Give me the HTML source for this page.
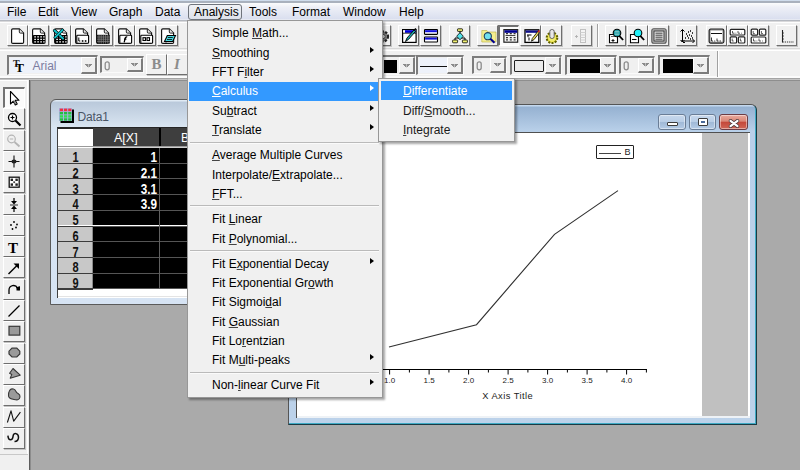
<!DOCTYPE html><html><head><meta charset="utf-8"><style>
*{margin:0;padding:0;box-sizing:border-box}
html,body{width:800px;height:470px;overflow:hidden}
body{position:relative;background:#aaaaaa;font-family:"Liberation Sans",sans-serif;font-size:12px;color:#000}
.a{position:absolute}
svg{position:absolute;overflow:visible}
#menubar{left:0;top:0;width:800px;height:22px;background:linear-gradient(#cfdcec 0,#cfdcec 1px,#a9b1bd 1px,#a9b1bd 3px,#fbfcfd 3px,#eef0f7 7px,#dadfef 19px,#e6e9f2 19px,#e6e9f2 20px,#b4b8c0 20px,#b4b8c0 21px,#d8d8da 21px,#d8d8da 22px)}
#menubar span{position:absolute;top:5px;line-height:14px;color:#000}
.tbbg{background:#f0f0f0}
.btn{position:absolute;border-left:1px solid #fff;border-top:1px solid #fff;border-right:1px solid #6e6e6e;border-bottom:1px solid #6e6e6e;box-shadow:1px 1px 0 #c4c4c4}
.combo{position:absolute;border-top:2px solid #7c7c7c;border-left:2px solid #7c7c7c;border-right:1px solid #fafafa;border-bottom:1px solid #fafafa;background:#f0f0f0}
.dd{position:absolute;top:0;bottom:0;right:0;width:16px;background:#efefef;border-top:1px solid #fff;border-left:1px solid #fff;border-right:2px solid #7c7c7c;border-bottom:2px solid #7c7c7c}
.dd:after{content:"";position:absolute;left:50%;top:50%;margin-left:-3.5px;margin-top:-1.5px;width:7px;height:3.5px;background:linear-gradient(to bottom right,transparent 49%,#8a8a8a 50%) left/3.5px 3.5px no-repeat,linear-gradient(to bottom left,transparent 49%,#8a8a8a 50%) right/3.5px 3.5px no-repeat;transform:rotate(180deg)}
.mi{position:absolute;left:24px;height:19px;line-height:19px;color:#1a1a1a;white-space:nowrap}

.arr{position:absolute;left:183px;width:0;height:0;border-top:4px solid transparent;border-bottom:4px solid transparent;border-left:4px solid #000}
u{text-decoration:underline;text-decoration-thickness:1.2px;text-underline-offset:1.3px;text-decoration-color:#444}
.w u{text-decoration-color:#fff}
.sep{position:absolute;left:4px;right:4px;height:1px;background:#c8c8c8;border-bottom:1px solid #fff}
</style></head><body>
<div id="menubar" class="a">
<span style="left:7px">File</span>
<span style="left:38px">Edit</span>
<span style="left:71px">View</span>
<span style="left:109px">Graph</span>
<span style="left:155px">Data</span>
<div class="a" style="left:188px;top:4px;width:54px;height:16px;border:1px solid #6f747c;border-radius:3px;background:linear-gradient(#f0f2f6,#dde1ea)"></div>
<span style="left:194px">Analysis</span>
<span style="left:249px">Tools</span>
<span style="left:292px">Format</span>
<span style="left:343px">Window</span>
<span style="left:399px">Help</span>
</div>
<div class="a tbbg" style="left:0;top:22px;width:800px;height:58px"></div>
<div class="a" style="left:0;top:22px;width:800px;height:1px;background:#fdfdfd"></div>
<div class="a" style="left:0;top:48px;width:800px;height:1px;background:#d8d8d8"></div>
<div class="a" style="left:0;top:50px;width:800px;height:1px;background:#fff"></div>
<div class="a" style="left:0;top:76px;width:800px;height:2px;background:#fbfbfb"></div>
<div class="a" style="left:0;top:78px;width:800px;height:2px;background:linear-gradient(#a4a4a4 50%,#c4c4c4 50%)"></div>
<div class="a" style="left:29px;top:80px;width:771px;height:1px;background:#8e8e8e"></div>
<div class="btn" style="left:7.0px;top:25px;width:21px;height:21px"></div>
<div class="a" style="left:10.0px;top:28px;width:16px;height:16px"><svg style="left:0px;top:0px" width="16" height="16" viewBox="0 0 16 16"><path d="M1.6 14.2V2Q1.6 0.8 2.8 0.8H9.3L13.6 5.1V14.2Q13.6 15.3 12.5 15.3H2.8Q1.6 15.3 1.6 14.2Z" fill="#fff" stroke="#111" stroke-width="1.15"/><path d="M9.3 1V4Q9.3 5.1 10.4 5.1H13.4" fill="#e4e4e4" stroke="#111" stroke-width="0.9"/></svg></div>
<div class="btn" style="left:28.4px;top:25px;width:21px;height:21px"></div>
<div class="a" style="left:31.4px;top:28px;width:16px;height:16px"><svg style="left:0px;top:0px" width="16" height="16" viewBox="0 0 16 16"><path d="M1.6 14.2V2Q1.6 0.8 2.8 0.8H9.3L13.6 5.1V14.2Q13.6 15.3 12.5 15.3H2.8Q1.6 15.3 1.6 14.2Z" fill="#fff" stroke="#111" stroke-width="1.15"/><path d="M9.3 1V4Q9.3 5.1 10.4 5.1H13.4" fill="#e4e4e4" stroke="#111" stroke-width="0.9"/><rect x="2" y="7" width="12.5" height="8.6" rx="0.6" fill="#000"/><path d="M3.3 8.8h1.6M6.3 8.8h1.6M9.3 8.8h1.6M12.2 8.8h1.4M3.3 11.3h1.6M6.3 11.3h1.6M9.3 11.3h1.6M12.2 11.3h1.4M3.3 13.8h1.6M6.3 13.8h1.6M9.3 13.8h1.6M12.2 13.8h1.4" stroke="#fff" stroke-width="1.3"/></svg></div>
<div class="btn" style="left:49.7px;top:25px;width:21px;height:21px"></div>
<div class="a" style="left:52.7px;top:28px;width:16px;height:16px"><svg style="left:0px;top:0px" width="16" height="16" viewBox="0 0 16 16"><path d="M1.6 14.2V2Q1.6 0.8 2.8 0.8H9.3L13.6 5.1V14.2Q13.6 15.3 12.5 15.3H2.8Q1.6 15.3 1.6 14.2Z" fill="#fff" stroke="#111" stroke-width="1.15"/><path d="M9.3 1V4Q9.3 5.1 10.4 5.1H13.4" fill="#e4e4e4" stroke="#111" stroke-width="0.9"/><rect x="2" y="7" width="12.5" height="8.6" rx="0.6" fill="#000"/><path d="M3.3 8.8h1.6M6.3 8.8h1.6M9.3 8.8h1.6M12.2 8.8h1.4M3.3 11.3h1.6M6.3 11.3h1.6M9.3 11.3h1.6M12.2 11.3h1.4M3.3 13.8h1.6M6.3 13.8h1.6M9.3 13.8h1.6M12.2 13.8h1.4" stroke="#fff" stroke-width="1.3"/><path d="M1.5 2.5L10 10.5" stroke="#000" stroke-width="3.2" stroke-linecap="round"/><path d="M1.5 2.5L10 10.5" stroke="#10c0c8" stroke-width="2" stroke-linecap="round"/><path d="M9.5 2L2 9.5" stroke="#000" stroke-width="3" stroke-linecap="round"/><path d="M9.5 2L2 9.5" stroke="#10c0c8" stroke-width="1.8" stroke-linecap="round"/></svg></div>
<div class="btn" style="left:71.1px;top:25px;width:21px;height:21px"></div>
<div class="a" style="left:74.1px;top:28px;width:16px;height:16px"><svg style="left:0px;top:0px" width="16" height="16" viewBox="0 0 16 16"><path d="M1.6 14.2V2Q1.6 0.8 2.8 0.8H9.3L13.6 5.1V14.2Q13.6 15.3 12.5 15.3H2.8Q1.6 15.3 1.6 14.2Z" fill="#fff" stroke="#111" stroke-width="1.15"/><path d="M9.3 1V4Q9.3 5.1 10.4 5.1H13.4" fill="#e4e4e4" stroke="#111" stroke-width="0.9"/><rect x="2.8" y="7.2" width="11.8" height="8" rx="0.8" fill="#fff" stroke="#000" stroke-width="1.1"/><path d="M4.8 9.5v3.5h1.5" stroke="#000" fill="none" stroke-width="1"/><rect x="7.8" y="12.2" width="1.6" height="1.6"/><rect x="10.8" y="12.2" width="1.6" height="1.6"/></svg></div>
<div class="btn" style="left:92.4px;top:25px;width:21px;height:21px"></div>
<div class="a" style="left:95.4px;top:28px;width:16px;height:16px"><svg style="left:0px;top:0px" width="16" height="16" viewBox="0 0 16 16"><path d="M1.6 14.2V2Q1.6 0.8 2.8 0.8H9.3L13.6 5.1V14.2Q13.6 15.3 12.5 15.3H2.8Q1.6 15.3 1.6 14.2Z" fill="#fff" stroke="#111" stroke-width="1.15"/><path d="M9.3 1V4Q9.3 5.1 10.4 5.1H13.4" fill="#e4e4e4" stroke="#111" stroke-width="0.9"/><rect x="2" y="6.8" width="12.8" height="8.8" fill="#1a1a1a"/><path d="M4 6.8v8.8M6.2 6.8v8.8M8.4 6.8v8.8M10.6 6.8v8.8M12.8 6.8v8.8M2 9h12.8M2 11.2h12.8M2 13.4h12.8" stroke="#8a8a8a" stroke-width="0.7"/></svg></div>
<div class="btn" style="left:113.8px;top:25px;width:21px;height:21px"></div>
<div class="a" style="left:116.8px;top:28px;width:16px;height:16px"><svg style="left:0px;top:0px" width="16" height="16" viewBox="0 0 16 16"><path d="M1.6 14.2V2Q1.6 0.8 2.8 0.8H9.3L13.6 5.1V14.2Q13.6 15.3 12.5 15.3H2.8Q1.6 15.3 1.6 14.2Z" fill="#fff" stroke="#111" stroke-width="1.15"/><path d="M9.3 1V4Q9.3 5.1 10.4 5.1H13.4" fill="#e4e4e4" stroke="#111" stroke-width="0.9"/><rect x="2.8" y="7.2" width="11.8" height="8" rx="0.8" fill="#fff" stroke="#000" stroke-width="1.1"/><path d="M10.2 9.2c-1.2-0.6-1.9 0-2.2 1.6l-0.8 3.6M7 11.2h2.4" stroke="#000" fill="none" stroke-width="1.3"/></svg></div>
<div class="btn" style="left:135.2px;top:25px;width:21px;height:21px"></div>
<div class="a" style="left:138.2px;top:28px;width:16px;height:16px"><svg style="left:0px;top:0px" width="16" height="16" viewBox="0 0 16 16"><path d="M1.6 14.2V2Q1.6 0.8 2.8 0.8H9.3L13.6 5.1V14.2Q13.6 15.3 12.5 15.3H2.8Q1.6 15.3 1.6 14.2Z" fill="#fff" stroke="#111" stroke-width="1.15"/><path d="M9.3 1V4Q9.3 5.1 10.4 5.1H13.4" fill="#e4e4e4" stroke="#111" stroke-width="0.9"/><rect x="2.8" y="7.2" width="11.8" height="8" rx="0.8" fill="#fff" stroke="#000" stroke-width="1.1"/><rect x="5" y="9.7" width="2.5" height="2.8" fill="none" stroke="#000" stroke-width="1.1"/><rect x="9" y="9.7" width="2.5" height="2.8" fill="none" stroke="#000" stroke-width="1.1"/></svg></div>
<div class="btn" style="left:156.5px;top:25px;width:21px;height:21px"></div>
<div class="a" style="left:159.5px;top:28px;width:16px;height:16px"><svg style="left:0px;top:0px" width="16" height="16" viewBox="0 0 16 16"><path d="M1.6 14.2V2Q1.6 0.8 2.8 0.8H9.3L13.6 5.1V14.2Q13.6 15.3 12.5 15.3H2.8Q1.6 15.3 1.6 14.2Z" fill="#fff" stroke="#111" stroke-width="1.15"/><path d="M9.3 1V4Q9.3 5.1 10.4 5.1H13.4" fill="#e4e4e4" stroke="#111" stroke-width="0.9"/><path d="M4.5 13.5L7.3 7.5H15.5L12.7 13.5Z" fill="#48d8e0" stroke="#000" stroke-width="1.1"/><path d="M7.8 9.5h5M7 11.5h5" stroke="#000" stroke-width="0.8"/><path d="M6 14.5v1.3" stroke="#000"/></svg></div>
<div class="btn" style="left:370px;top:25px;width:21px;height:21px"></div>
<svg style="left:375px;top:28px" width="16" height="16" viewBox="0 0 16 16"><circle cx="8" cy="8.5" r="5" fill="#888" stroke="#222" stroke-width="2.2" stroke-dasharray="2.2 1.4"/><circle cx="8" cy="8.5" r="2.2" fill="#eee" stroke="#333" stroke-width="0.8"/></svg>
<div class="btn" style="left:398px;top:25px;width:21px;height:21px"></div>
<svg style="left:401px;top:28px" width="16" height="16" viewBox="0 0 16 16"><rect x="1.6" y="1.6" width="13.5" height="12.8" fill="#fff" stroke="#000" stroke-width="1.2"/><rect x="4" y="2.2" width="10.5" height="2.6" fill="#0000e0"/><rect x="2.2" y="2.2" width="1.5" height="2.6" fill="#fff"/><path d="M1.6 5.2h13.5" stroke="#000" stroke-width="0.8"/><path d="M4.5 13.5l1.5-3.5 7-8 1.6 1.3-7 8z" fill="#20b0b0" stroke="#000" stroke-width="0.9"/><path d="M13 2l2-1.5" stroke="#000" stroke-width="1.2"/></svg>
<div class="btn" style="left:420px;top:25px;width:21px;height:21px"></div>
<svg style="left:422.5px;top:28px" width="16" height="16" viewBox="0 0 16 16"><rect x="1.5" y="1.6" width="13" height="4.8" rx="0.6" fill="#fff" stroke="#000" stroke-width="1.1"/><rect x="2.1" y="2.2" width="11.8" height="2" fill="#1010e0"/><rect x="1.5" y="9" width="13" height="5" rx="0.6" fill="#fff" stroke="#000" stroke-width="1.1"/><rect x="2.1" y="9.6" width="11.8" height="2" fill="#1010e0"/></svg>
<div class="btn" style="left:449px;top:25px;width:21px;height:21px"></div>
<svg style="left:451.5px;top:28px" width="16" height="16" viewBox="0 0 16 16"><path d="M8 2.5v4M3 12.5V10h10v2.5M8 9v1" stroke="#000" fill="none" stroke-width="1"/><rect x="5.5" y="0.8" width="5" height="2.6" rx="0.6" fill="#f0f070" stroke="#000" stroke-width="0.8"/><path d="M8 4.6l3.3 3.6L8 11.8 4.7 8.2z" fill="#50e0e8" stroke="#000" stroke-width="0.8"/><rect x="0.6" y="12" width="5" height="2.8" rx="0.6" fill="#f0f070" stroke="#000" stroke-width="0.8"/><rect x="10.4" y="12" width="5" height="2.8" rx="0.6" fill="#f0f070" stroke="#000" stroke-width="0.8"/></svg>
<div class="btn" style="left:477px;top:25px;width:21px;height:21px"></div>
<svg style="left:480.5px;top:28px" width="16" height="16" viewBox="0 0 16 16"><path d="M0.8 2.5h5l1.2 1.5h8v10H0.8z" fill="#f4ee90" stroke="#b8b040" stroke-width="0.6"/><circle cx="6.8" cy="8.2" r="3.6" fill="#70e0f0" stroke="#204060" stroke-width="1.1"/><path d="M9.3 10.8l4.2 4" stroke="#000090" stroke-width="2.1"/></svg>
<div class="a" style="left:498px;top:25px;width:21px;height:21px;border-left:2px solid #727272;border-top:2px solid #727272;border-right:1px solid #fff;border-bottom:1px solid #fff;background:#fbfbfb"></div>
<svg style="left:503px;top:28px" width="16" height="16" viewBox="0 0 16 16"><rect x="0.9" y="1.6" width="13.8" height="12.6" fill="#f4f4f4" stroke="#222" stroke-width="1.2"/><rect x="1.5" y="2.2" width="12.6" height="2.6" fill="#000090"/><path d="M2.5 7.5h9.8" stroke="#333" stroke-width="0.9"/><path d="M3 5.6h2M6.8 5.6h2M10.6 5.6h2M3 9.6h2M6.8 9.6h2M10.6 9.6h2M3 11.8h2M6.8 11.8h2M10.6 11.8h2" stroke="#333" stroke-width="1.2"/></svg>
<div class="btn" style="left:519.5px;top:25px;width:21px;height:21px"></div>
<svg style="left:523.5px;top:28px" width="16" height="16" viewBox="0 0 16 16"><rect x="1" y="1.8" width="13.8" height="12.6" fill="#fff" stroke="#000" stroke-width="1.3"/><rect x="1.6" y="2.4" width="12.6" height="2.4" fill="#10108a"/><path d="M3 7h4.5M4 7v2.2M5 9.5v3" stroke="#000" stroke-width="1"/><path d="M7.5 13.2l0.8-2.8 5.5-7 1.6 1.3-5.5 7z" fill="#f0e060" stroke="#000" stroke-width="0.8"/><path d="M13.6 3.5l1.2-1.6 1.2 1-1.2 1.6z" fill="#e02020"/></svg>
<div class="btn" style="left:541px;top:25px;width:21px;height:21px"></div>
<svg style="left:544px;top:28px" width="16" height="16" viewBox="0 0 16 16"><circle cx="8" cy="9.8" r="5.3" fill="#e8e040" stroke="#606000" stroke-width="2" stroke-dasharray="2 1.3"/><circle cx="8" cy="9.8" r="3.6" fill="#f0ec70"/><rect x="5.8" y="1.5" width="4.4" height="9" rx="2" fill="#e8e8e8" stroke="#555" stroke-width="0.9"/></svg>
<div class="btn" style="left:570.5px;top:25px;width:21px;height:21px"></div>
<svg style="left:573px;top:28px" width="16" height="16" viewBox="0 0 16 16"><path d="M2 8.5h3M3.5 7v3" stroke="#b0b0b0" stroke-width="0.9"/><rect x="7.5" y="1.5" width="5" height="13" fill="#f4f4f4" stroke="#c0c0c0"/><path d="M7.5 4.5h5M7.5 7h5M7.5 9.5h5M7.5 12h5" stroke="#d0d0d0"/></svg>
<div class="a" style="left:597px;top:24px;width:1px;height:23px;background:#a0a0a0"></div><div class="a" style="left:598px;top:24px;width:1px;height:23px;background:#fff"></div>
<div class="btn" style="left:605px;top:25px;width:21px;height:21px"></div>
<svg style="left:607.5px;top:28px" width="16" height="16" viewBox="0 0 16 16"><path d="M1.5 6.5h7l1 1v7.3h-8z" fill="#fff" stroke="#000" stroke-width="1.1"/><path d="M3.5 12.5h3M5 11v3" stroke="#000" stroke-width="0.9"/><path d="M3 8.5h4" stroke="#000" stroke-width="0.6"/><circle cx="9" cy="5" r="3.8" fill="#20a0a8" stroke="#000" stroke-width="1.1"/><path d="M7 3.5h4M7 5h4M7 6.5h4" stroke="#c0e0e0" stroke-width="0.5"/><path d="M11.3 7.8l3.8 4.2" stroke="#000" stroke-width="1.8"/></svg>
<div class="btn" style="left:626.5px;top:25px;width:21px;height:21px"></div>
<svg style="left:629px;top:28px" width="16" height="16" viewBox="0 0 16 16"><path d="M1.5 6.5h7l1 1v7.3h-8z" fill="#fff" stroke="#000" stroke-width="1.1"/><path d="M3 11.5h4.5" stroke="#000" stroke-width="1.1"/><circle cx="9" cy="5" r="3.8" fill="#20f0f8" stroke="#000" stroke-width="1.1"/><path d="M11.3 7.8l3.8 4.2" stroke="#000" stroke-width="1.8"/></svg>
<div class="btn" style="left:648px;top:25px;width:21px;height:21px"></div>
<svg style="left:650.5px;top:28px" width="16" height="16" viewBox="0 0 16 16"><rect x="0.8" y="0.8" width="14.4" height="14.4" rx="2" fill="#b4b4b4" stroke="#555" stroke-width="1.1"/><rect x="3" y="3" width="10" height="10" fill="#e4e4e4" stroke="#303030" stroke-width="0.9"/><path d="M4.5 5.2h7M4.5 7.2h7M4.5 9.2h7M4.5 11.2h7" stroke="#333" stroke-width="0.9"/></svg>
<div class="btn" style="left:676px;top:25px;width:21px;height:21px"></div>
<svg style="left:679px;top:28px" width="16" height="16" viewBox="0 0 16 16"><path d="M3.5 1.5v12.5M1.5 3.5l2-2 2 2M1.5 12l2 2 2-2M2 13h13.5M13.5 11l2 2-2 2M4 14.5h2" stroke="#000" fill="none" stroke-width="1"/><path d="M7 6h1M9 4h1M11 3h1M13 5h1M8 8h1M10 7h1M12 8h1M9 10h1M13 10h1M11 11h1M6 10h1" stroke="#000" stroke-width="1.3"/></svg>
<div class="btn" style="left:705.5px;top:25px;width:21px;height:21px"></div>
<svg style="left:708px;top:28px" width="16" height="16" viewBox="0 0 16 16"><rect x="1.2" y="1.2" width="14.6" height="13.8" rx="1.5" fill="#fff" stroke="#222" stroke-width="1.3"/><rect x="2.2" y="2.2" width="12.6" height="11.8" fill="none" stroke="#888" stroke-width="0.6"/><path d="M3 5.5h11" stroke="#111" stroke-width="1"/><path d="M3.5 9.5v3.5h1.5M9 10.5v2.5h1.5" stroke="#222" fill="none" stroke-width="0.9"/><path d="M6.2 13h1M11.5 13h1.5" stroke="#222" stroke-width="0.9"/></svg>
<div class="btn" style="left:727px;top:25px;width:21px;height:21px"></div>
<svg style="left:728.5px;top:28px" width="16" height="16" viewBox="0 0 16 16"><rect x="1.2" y="1.4" width="14.6" height="5.6" rx="1" fill="#fff" stroke="#222" stroke-width="1.2"/><path d="M3.5 3v2.2h2M9 3v2.2h2M6.5 5.2h0.8M12 5.2h0.8" stroke="#333" fill="none" stroke-width="0.8"/><rect x="1.2" y="8.8" width="6.4" height="6.2" rx="1" fill="#fff" stroke="#222" stroke-width="1.2"/><rect x="9.4" y="8.8" width="6.4" height="6.2" rx="1" fill="#fff" stroke="#222" stroke-width="1.2"/><path d="M3.2 10.5v2.5h1.5M11.4 10.5v2.5h1.5" stroke="#333" fill="none" stroke-width="0.8"/></svg>
<div class="btn" style="left:748px;top:25px;width:21px;height:21px"></div>
<svg style="left:749.5px;top:28px" width="16" height="16" viewBox="0 0 16 16"><rect x="1.2" y="1.2" width="6.4" height="6" rx="1" fill="#fff" stroke="#222" stroke-width="1.2"/><rect x="9.4" y="1.2" width="6.4" height="6" rx="1" fill="#fff" stroke="#222" stroke-width="1.2"/><path d="M3.2 3v2.5h1.5M11.4 3v2.5h1.5" stroke="#333" fill="none" stroke-width="0.8"/><rect x="1.2" y="9" width="14.6" height="6" rx="1" fill="#fff" stroke="#222" stroke-width="1.2"/><path d="M3.5 10.5v2.5h2M9 10.5v2.5h2M6.5 13h0.8M12 13h0.8" stroke="#333" fill="none" stroke-width="0.8"/></svg>
<div class="btn" style="left:776px;top:25px;width:21px;height:21px"></div>
<svg style="left:779px;top:28px" width="16" height="16" viewBox="0 0 16 16"><path d="M3.5 2v12.5" stroke="#222" stroke-width="1.1"/><path d="M3.5 14h11.5" stroke="#333" stroke-width="1.1" stroke-dasharray="1.3 0.9"/><path d="M4 5h1M4 8h1M4 11h1" stroke="#444" stroke-width="0.9"/></svg>
<div class="combo" style="left:7px;top:55px;width:91px;height:20px"><div class="a" style="left:1px;top:1px;right:1px;bottom:1px;background:#eef2fa"></div><svg style="left:2px;top:1px" width="18" height="16" viewBox="0 0 18 16"><text x="2" y="9" font-family="Liberation Serif" font-weight="bold" font-size="10" fill="#222">T</text><text x="4.2" y="13.6" font-family="Liberation Serif" font-weight="bold" font-size="13" fill="#000">T</text></svg><span class="a" style="left:23.5px;top:1.5px;line-height:14px;color:#7c7ca0">Arial</span><div class="dd"></div></div>
<div class="combo" style="left:100px;top:56px;width:44px;height:17px"><svg style="left:1.5px;top:3px" width="7" height="10" viewBox="0 0 7 10"><rect x="1.2" y="0.8" width="4" height="8" rx="2" fill="none" stroke="#8c8c8c" stroke-width="1.3"/></svg><div class="dd"></div></div>
<div class="btn" style="left:146px;top:54px;width:21px;height:21px"></div>
<span class="a" style="left:151.5px;top:57px;font:bold 15px/14px 'Liberation Serif';color:#8c8c8c">B</span>
<div class="btn" style="left:167px;top:54px;width:21px;height:21px"></div>
<span class="a" style="left:174px;top:57px;font:italic bold 15px/14px 'Liberation Serif';color:#8c8c8c">I</span>
<div class="combo" style="left:368px;top:55px;width:48px;height:20px"><div class="a" style="left:14px;top:3px;width:13px;height:13px;background:#000"></div><div class="dd"></div></div>
<div class="combo" style="left:416px;top:55px;width:48px;height:20px"><div class="a" style="left:1px;top:1px;right:1px;bottom:1px;background:#eef2fa"></div><div class="a" style="left:2px;top:9px;width:32px;height:1.2px;background:#111"></div><div class="dd"></div></div>
<div class="combo" style="left:472px;top:56px;width:34.5px;height:17.5px"><svg style="left:2px;top:3px" width="7" height="10" viewBox="0 0 7 10"><rect x="1.2" y="0.8" width="4" height="8" rx="2" fill="none" stroke="#8c8c8c" stroke-width="1.3"/></svg><div class="dd"></div></div>
<div class="combo" style="left:509.5px;top:55px;width:52.5px;height:20px"><div class="a" style="left:2.5px;top:2.5px;width:29.5px;height:12.5px;border:1.5px solid #202020;border-radius:1px;background:#ececec"></div><div class="dd"></div></div>
<div class="combo" style="left:564.5px;top:55px;width:52px;height:20px"><div class="a" style="left:3px;top:1.5px;width:30.5px;height:14.5px;background:#000"></div><div class="dd"></div></div>
<div class="combo" style="left:619px;top:56px;width:36px;height:17.5px"><svg style="left:2px;top:3px" width="7" height="10" viewBox="0 0 7 10"><rect x="1.2" y="0.8" width="4" height="8" rx="2" fill="none" stroke="#8c8c8c" stroke-width="1.3"/></svg><div class="dd"></div></div>
<div class="combo" style="left:657.5px;top:55px;width:52px;height:20px"><div class="a" style="left:3px;top:1.5px;width:30.5px;height:14.5px;background:#000"></div><div class="dd"></div></div>
<div class="a" style="left:717px;top:51px;width:1px;height:26px;background:#a0a0a0"></div><div class="a" style="left:718px;top:51px;width:1px;height:26px;background:#fff"></div>
<div class="a tbbg" style="left:0;top:80px;width:29px;height:375px"></div>
<div class="a" style="left:0;top:80px;width:28px;height:1px;background:#fff"></div>
<div class="a" style="left:27px;top:80px;width:1px;height:375px;background:#fff"></div>
<div class="a" style="left:29px;top:80px;width:2px;height:390px;background:linear-gradient(90deg,#5c5c5c 50%,#8c8c8c 50%)"></div>
<div class="a" style="left:0;top:455px;width:29px;height:15px;background:#f0f0f0"></div>
<div class="a" style="left:3px;top:87.0px;width:22px;height:21px;border-left:2px solid #727272;border-top:2px solid #727272;border-right:1px solid #fff;border-bottom:1px solid #fff;background:#fbfbfb"></div>
<svg style="left:5.5px;top:90.0px" width="16" height="16" viewBox="0 0 16 16"><path d="M4.5 1.5V14L7.3 11.2 9.3 15 11.2 14 9.2 10.3H13Z" fill="#fff" stroke="#000" stroke-width="1.1" stroke-linejoin="round"/><path d="M8 11l1.5 3" stroke="#777" stroke-width="1.5"/></svg>
<div class="btn" style="left:3px;top:108.3px;width:22px;height:21px"></div>
<svg style="left:5.5px;top:111.3px" width="16" height="16" viewBox="0 0 16 16"><circle cx="6.5" cy="6.5" r="4" fill="#fff" stroke="#000" stroke-width="1.3"/><path d="M4.5 6.5h4M6.5 4.5v4" stroke="#000" stroke-width="1.2"/><path d="M9.5 9.5l5 5" stroke="#000" stroke-width="2.2"/></svg>
<div class="btn" style="left:3px;top:129.6px;width:22px;height:21px"></div>
<svg style="left:5.5px;top:132.6px" width="16" height="16" viewBox="0 0 16 16"><circle cx="5.5" cy="6" r="3.8" fill="none" stroke="#b4b4b4" stroke-width="1.2"/><path d="M3.8 6h3.4" stroke="#b4b4b4" stroke-width="1"/><path d="M8.5 9l5 4.5" stroke="#b4b4b4" stroke-width="1.8"/></svg>
<div class="btn" style="left:3px;top:150.9px;width:22px;height:21px"></div>
<svg style="left:5.5px;top:153.9px" width="16" height="16" viewBox="0 0 16 16"><path d="M2.5 7.5h11M8 1.5v12" stroke="#111" stroke-width="1.1"/><ellipse cx="8" cy="7.5" rx="2.6" ry="2" fill="#222"/></svg>
<div class="btn" style="left:3px;top:172.2px;width:22px;height:21px"></div>
<svg style="left:5.5px;top:175.2px" width="16" height="16" viewBox="0 0 16 16"><rect x="3.2" y="2.2" width="10" height="10" fill="#fff" stroke="#111" stroke-width="1.3"/><rect x="4.6" y="3.6" width="2.4" height="2.4" fill="#222"/><rect x="9.4" y="3.6" width="2.4" height="2.4" fill="#222"/><rect x="4.6" y="8.4" width="2.4" height="2.4" fill="#222"/><rect x="9.4" y="8.4" width="2.4" height="2.4" fill="#222"/><rect x="7.3" y="6.3" width="1.8" height="1.8" fill="#444"/></svg>
<div class="btn" style="left:3px;top:193.5px;width:22px;height:21px"></div>
<svg style="left:5.5px;top:196.5px" width="16" height="16" viewBox="0 0 16 16"><path d="M8 1v5M8 10v5M2 8h0" stroke="#000" stroke-width="1.2"/><path d="M5 4l3 3.5 3-3.5z" fill="#000"/><path d="M5 12l3-3.5 3 3.5z" fill="#000"/><path d="M4 8h8" stroke="#000" stroke-width="0.8"/></svg>
<div class="btn" style="left:3px;top:214.8px;width:22px;height:21px"></div>
<svg style="left:5.5px;top:217.8px" width="16" height="16" viewBox="0 0 16 16"><circle cx="8" cy="4" r="0.9" fill="#000"/><circle cx="5" cy="7" r="0.9" fill="#000"/><circle cx="11" cy="6.5" r="0.9" fill="#000"/><circle cx="10" cy="9.5" r="0.9" fill="#000"/><circle cx="6.5" cy="11" r="0.9" fill="#000"/></svg>
<div class="btn" style="left:3px;top:236.1px;width:22px;height:21px"></div>
<svg style="left:5.5px;top:239.1px" width="16" height="16" viewBox="0 0 16 16"><text x="2" y="14" font-family="Liberation Serif" font-weight="bold" font-size="15">T</text></svg>
<div class="btn" style="left:3px;top:257.4px;width:22px;height:21px"></div>
<svg style="left:5.5px;top:260.4px" width="16" height="16" viewBox="0 0 16 16"><path d="M2.5 14L12 4.5" stroke="#000" stroke-width="1.5"/><path d="M7.5 3.5H13V9z" fill="#000"/></svg>
<div class="btn" style="left:3px;top:278.7px;width:22px;height:21px"></div>
<svg style="left:5.5px;top:281.7px" width="16" height="16" viewBox="0 0 16 16"><path d="M3 12V8a4.5 4.5 0 0 1 8.5-2" fill="none" stroke="#000" stroke-width="1.3"/><path d="M10 5.5l4-1.5-1 4.5z" fill="#000"/><rect x="10.5" y="5" width="3.5" height="3.5" fill="#000"/></svg>
<div class="btn" style="left:3px;top:300.0px;width:22px;height:21px"></div>
<svg style="left:5.5px;top:303.0px" width="16" height="16" viewBox="0 0 16 16"><path d="M2.5 13.5L13.5 2.5" stroke="#000" stroke-width="1.3"/></svg>
<div class="btn" style="left:3px;top:321.3px;width:22px;height:21px"></div>
<svg style="left:5.5px;top:324.3px" width="16" height="16" viewBox="0 0 16 16"><rect x="3" y="2.3" width="10.8" height="8.8" fill="#9a9a9a" stroke="#383838" stroke-width="1.2"/></svg>
<div class="btn" style="left:3px;top:342.6px;width:22px;height:21px"></div>
<svg style="left:5.5px;top:345.6px" width="16" height="16" viewBox="0 0 16 16"><path d="M6 2.2h4.8l3 3v2.8l-3 3H6l-3-3V5.2z" fill="#9a9a9a" stroke="#383838" stroke-width="1.2"/></svg>
<div class="btn" style="left:3px;top:363.9px;width:22px;height:21px"></div>
<svg style="left:5.5px;top:366.9px" width="16" height="16" viewBox="0 0 16 16"><path d="M7 1.5L14.2 8.2 4.2 11.2 5.8 7.4 3.6 6.2Z" fill="#9a9a9a" stroke="#383838" stroke-width="1.1" stroke-linejoin="round"/></svg>
<div class="btn" style="left:3px;top:385.2px;width:22px;height:21px"></div>
<svg style="left:5.5px;top:388.2px" width="16" height="16" viewBox="0 0 16 16"><path d="M4 2c2-2 5-1 6 1.5s4.5 2 4 5.5-3.5 3-6 2.5-5.5-0.5-5.5-4 0-3 1.5-5.5z" fill="#9a9a9a" stroke="#383838" stroke-width="1.1"/></svg>
<div class="btn" style="left:3px;top:406.5px;width:22px;height:21px"></div>
<svg style="left:5.5px;top:409.5px" width="16" height="16" viewBox="0 0 16 16"><path d="M1.4 12.5L5 0.9 7.7 11.1 14.4 2.2" fill="none" stroke="#111" stroke-width="1.1" stroke-linejoin="round"/></svg>
<div class="btn" style="left:3px;top:427.8px;width:22px;height:21px"></div>
<svg style="left:5.5px;top:430.8px" width="16" height="16" viewBox="0 0 16 16"><path d="M1.9 4.6C2.5 10.2 6.5 10.2 7.2 4.6 7.5 1.2 12.5 2.2 12.5 6.2 12.5 10.2 9.5 10.4 8.5 10.4" fill="none" stroke="#111" stroke-width="1.5"/></svg>
<div class="a" style="left:0;top:454px;width:28px;height:1px;background:#c8c8c8"></div>
<div class="a" style="left:50px;top:99px;width:160px;height:206px;border:1px solid #5a5a5a;border-radius:6px 6px 0 0;background:linear-gradient(#e0eaf4 0,#e0eaf4 1px,#bac9db 2px,#d9e5f1 27px,#d8e5f3 28px,#d6e3f3)"></div>
<svg style="left:59px;top:108px" width="15" height="15" viewBox="0 0 15 15"><rect x="0" y="0" width="13" height="13" fill="#a8b0e0"/><rect x="0.8" y="0.6" width="3.2" height="2.6" fill="#f03040"/><rect x="5" y="0.6" width="3.2" height="2.6" fill="#f03040"/><rect x="9.2" y="0.6" width="3.2" height="2.6" fill="#f03040"/><rect x="0.8" y="4" width="3.2" height="2.4" fill="#20c040"/><rect x="5" y="4" width="3.2" height="2.4" fill="#20c040"/><rect x="9.2" y="4" width="3.2" height="2.4" fill="#20c040"/><rect x="0.8" y="7.2" width="3.2" height="2.4" fill="#30e050"/><rect x="5" y="7.2" width="3.2" height="2.4" fill="#30e050"/><rect x="9.2" y="7.2" width="3.2" height="2.4" fill="#30e050"/><rect x="0.8" y="10.3" width="3.2" height="2.4" fill="#20c040"/><rect x="5" y="10.3" width="3.2" height="2.4" fill="#20c040"/><rect x="9.2" y="10.3" width="3.2" height="2.4" fill="#20c040"/><path d="M14 1.5V14H1.5" stroke="#000" stroke-width="2" fill="none"/></svg>
<span class="a" style="left:77.5px;top:109.5px;font-size:12px;line-height:14px;letter-spacing:-0.15px;color:#4a5566">Data1</span>
<div class="a" style="left:57px;top:126.5px;width:140px;height:171px;background:#fff;border-left:1px solid #404040;border-top:2px solid #262626"></div>
<div class="a" style="left:93px;top:128px;width:110px;height:19px;background:#3e3e3e"></div>
<div class="a" style="left:159px;top:128px;width:2px;height:19px;background:#000"></div>
<div class="a" style="left:58px;top:146px;width:140px;height:1px;background:#9a9a9a"></div>
<div class="a" style="left:93px;top:147px;width:110px;height:1px;background:#d0d0d0"></div>
<span class="a" style="left:114px;top:131px;line-height:14px;font-size:12.5px;color:#fff">A[X]</span>
<span class="a" style="left:181px;top:131px;line-height:14px;color:#fff">B</span>
<div class="a" style="left:58px;top:148.0px;width:35px;height:14.7px;background:#c8c8c8;border-right:1px solid #8a8a8a"></div>
<div class="a" style="left:93px;top:148.0px;width:110px;height:14.7px;background:#000"></div>
<div class="a" style="left:58px;top:162.70px;width:35px;height:1.3px;background:#3c3c3c"></div>
<div class="a" style="left:93px;top:162.70px;width:110px;height:1px;background:#555"></div>
<span class="a" style="left:58px;top:150.30px;width:35px;text-align:center;font-weight:bold;line-height:15px;font-size:13.8px;color:#111;transform:scaleX(0.8)">1</span>
<span class="a" style="left:93px;top:150.30px;width:64px;text-align:right;font-weight:bold;line-height:15px;font-size:13.8px;color:#fff;transform:scaleX(0.85);transform-origin:right center">1</span>
<div class="a" style="left:58px;top:163.7px;width:35px;height:14.7px;background:#c8c8c8;border-right:1px solid #8a8a8a"></div>
<div class="a" style="left:93px;top:163.7px;width:110px;height:14.7px;background:#000"></div>
<div class="a" style="left:58px;top:178.40px;width:35px;height:1.3px;background:#3c3c3c"></div>
<div class="a" style="left:93px;top:178.40px;width:110px;height:1px;background:#555"></div>
<span class="a" style="left:58px;top:166.00px;width:35px;text-align:center;font-weight:bold;line-height:15px;font-size:13.8px;color:#111;transform:scaleX(0.8)">2</span>
<span class="a" style="left:93px;top:166.00px;width:64px;text-align:right;font-weight:bold;line-height:15px;font-size:13.8px;color:#fff;transform:scaleX(0.85);transform-origin:right center">2.1</span>
<div class="a" style="left:58px;top:179.4px;width:35px;height:14.7px;background:#c8c8c8;border-right:1px solid #8a8a8a"></div>
<div class="a" style="left:93px;top:179.4px;width:110px;height:14.7px;background:#000"></div>
<div class="a" style="left:58px;top:194.10px;width:35px;height:1.3px;background:#3c3c3c"></div>
<div class="a" style="left:93px;top:194.10px;width:110px;height:1px;background:#555"></div>
<span class="a" style="left:58px;top:181.70px;width:35px;text-align:center;font-weight:bold;line-height:15px;font-size:13.8px;color:#111;transform:scaleX(0.8)">3</span>
<span class="a" style="left:93px;top:181.70px;width:64px;text-align:right;font-weight:bold;line-height:15px;font-size:13.8px;color:#fff;transform:scaleX(0.85);transform-origin:right center">3.1</span>
<div class="a" style="left:58px;top:195.1px;width:35px;height:14.7px;background:#c8c8c8;border-right:1px solid #8a8a8a"></div>
<div class="a" style="left:93px;top:195.1px;width:110px;height:14.7px;background:#000"></div>
<div class="a" style="left:58px;top:209.80px;width:35px;height:1.3px;background:#3c3c3c"></div>
<div class="a" style="left:93px;top:209.80px;width:110px;height:1px;background:#555"></div>
<span class="a" style="left:58px;top:197.40px;width:35px;text-align:center;font-weight:bold;line-height:15px;font-size:13.8px;color:#111;transform:scaleX(0.8)">4</span>
<span class="a" style="left:93px;top:197.40px;width:64px;text-align:right;font-weight:bold;line-height:15px;font-size:13.8px;color:#fff;transform:scaleX(0.85);transform-origin:right center">3.9</span>
<div class="a" style="left:58px;top:210.8px;width:35px;height:14.7px;background:#c8c8c8;border-right:1px solid #8a8a8a"></div>
<div class="a" style="left:93px;top:210.8px;width:110px;height:14.7px;background:#000"></div>
<div class="a" style="left:58px;top:225.50px;width:35px;height:1.3px;background:#3c3c3c"></div>
<div class="a" style="left:93px;top:225.50px;width:110px;height:1px;background:#555"></div>
<span class="a" style="left:58px;top:213.10px;width:35px;text-align:center;font-weight:bold;line-height:15px;font-size:13.8px;color:#111;transform:scaleX(0.8)">5</span>
<div class="a" style="left:58px;top:226.5px;width:35px;height:14.7px;background:#c8c8c8;border-right:1px solid #8a8a8a"></div>
<div class="a" style="left:93px;top:226.5px;width:110px;height:14.7px;background:#000"></div>
<div class="a" style="left:58px;top:241.20px;width:35px;height:1.3px;background:#3c3c3c"></div>
<div class="a" style="left:93px;top:241.20px;width:110px;height:1px;background:#555"></div>
<span class="a" style="left:58px;top:228.80px;width:35px;text-align:center;font-weight:bold;line-height:15px;font-size:13.8px;color:#111;transform:scaleX(0.8)">6</span>
<div class="a" style="left:58px;top:242.2px;width:35px;height:14.7px;background:#c8c8c8;border-right:1px solid #8a8a8a"></div>
<div class="a" style="left:93px;top:242.2px;width:110px;height:14.7px;background:#000"></div>
<div class="a" style="left:58px;top:256.90px;width:35px;height:1.3px;background:#3c3c3c"></div>
<div class="a" style="left:93px;top:256.90px;width:110px;height:1px;background:#555"></div>
<span class="a" style="left:58px;top:244.50px;width:35px;text-align:center;font-weight:bold;line-height:15px;font-size:13.8px;color:#111;transform:scaleX(0.8)">7</span>
<div class="a" style="left:58px;top:257.9px;width:35px;height:14.7px;background:#c8c8c8;border-right:1px solid #8a8a8a"></div>
<div class="a" style="left:93px;top:257.9px;width:110px;height:14.7px;background:#000"></div>
<div class="a" style="left:58px;top:272.60px;width:35px;height:1.3px;background:#3c3c3c"></div>
<div class="a" style="left:93px;top:272.60px;width:110px;height:1px;background:#555"></div>
<span class="a" style="left:58px;top:260.20px;width:35px;text-align:center;font-weight:bold;line-height:15px;font-size:13.8px;color:#111;transform:scaleX(0.8)">8</span>
<div class="a" style="left:58px;top:273.6px;width:35px;height:14.7px;background:#c8c8c8;border-right:1px solid #8a8a8a"></div>
<div class="a" style="left:93px;top:273.6px;width:110px;height:14.7px;background:#000"></div>
<div class="a" style="left:58px;top:288.30px;width:35px;height:1.3px;background:#3c3c3c"></div>
<div class="a" style="left:93px;top:288.30px;width:110px;height:1px;background:#555"></div>
<span class="a" style="left:58px;top:275.90px;width:35px;text-align:center;font-weight:bold;line-height:15px;font-size:13.8px;color:#111;transform:scaleX(0.8)">9</span>
<div class="a" style="left:159px;top:148px;width:1px;height:141px;background:#606060"></div>
<div class="a" style="left:58px;top:290px;width:140px;height:7px;background:#fff;border-bottom:1px solid #e4e4e4"></div>
<div class="a" style="left:288px;top:104px;width:469px;height:321px;border:1px solid #555;border-bottom-color:#1a3a44;border-right-color:#1a3a44;border-radius:6px 6px 0 0;background:linear-gradient(#c4d8ee 0,#c4d8ee 1px,#95b1d1 2px,#bad1ea 27px,#b9cfe9 28px,#bcd2ea);box-shadow:inset -1px -1px 0 #3eaac4"></div>
<div class="a" style="left:296px;top:132px;width:454px;height:286px;background:#fff;border-left:1px solid #505050;border-top:1px solid #505050"></div>
<div class="a" style="left:702px;top:133px;width:46px;height:283px;background:#c0c0c0"></div>
<div class="a" style="left:297px;top:416px;width:453px;height:2px;background:#eef2f6"></div>
<div class="a" style="left:658px;top:114px;width:28px;height:16px;border:1px solid #6a7d96;border-radius:3px;background:linear-gradient(#c8d8ec,#b8cde6 50%,#9fb8d6 50%,#b4cbe6);box-shadow:inset 0 0 0 1px rgba(255,255,255,0.45)"><div class="a" style="left:8px;top:7px;width:11px;height:4px;background:#fff;border:1px solid #3c3c3c;border-radius:1px"></div></div>
<div class="a" style="left:689px;top:114px;width:27px;height:16px;border:1px solid #6a7d96;border-radius:3px;background:linear-gradient(#c8d8ec,#b8cde6 50%,#9fb8d6 50%,#b4cbe6);box-shadow:inset 0 0 0 1px rgba(255,255,255,0.45)"><div class="a" style="left:8px;top:3px;width:10px;height:8px;background:#fff;border:1px solid #3c3c3c;border-radius:1px"><div class="a" style="left:2px;top:2px;width:4px;height:2px;background:#4a6a9a"></div></div></div>
<div class="a" style="left:719px;top:114px;width:29px;height:16px;border:1px solid #6b3c44;border-radius:3px;background:linear-gradient(#e8aa9e,#d98676 45%,#c4473a 50%,#cf6656);box-shadow:inset 0 0 0 1px rgba(255,255,255,0.45)"><svg style="left:8px;top:3.5px" width="12" height="9" viewBox="0 0 12 9"><path d="M2.5 1.8L9.5 7.2M9.5 1.8L2.5 7.2" stroke="#4a3a3a" stroke-width="3.6" stroke-linecap="round"/><path d="M2.5 1.8L9.5 7.2M9.5 1.8L2.5 7.2" stroke="#fff" stroke-width="2.2" stroke-linecap="round"/></svg></div>
<div class="a" style="left:596px;top:145px;width:38px;height:14px;border:1.3px solid #222;background:#fff;border-radius:1px"></div>
<div class="a" style="left:599px;top:152.5px;width:22px;height:1.2px;background:#444"></div>
<span class="a" style="left:624.5px;top:146.5px;font-size:9px;line-height:10px;color:#222">B</span>
<svg style="left:0;top:0" width="800" height="470" viewBox="0 0 800 470"><path d="M300 369.5H647" stroke="#000" stroke-width="1.2"/><path d="M389.6 369.5v5" stroke="#000" stroke-width="1"/><path d="M409.4 369.5v3" stroke="#000" stroke-width="1"/><text x="389.6" y="383" font-size="8" text-anchor="middle" font-family="Liberation Sans" fill="#222">1.0</text><path d="M429.1 369.5v5" stroke="#000" stroke-width="1"/><path d="M448.9 369.5v3" stroke="#000" stroke-width="1"/><text x="429.1" y="383" font-size="8" text-anchor="middle" font-family="Liberation Sans" fill="#222">1.5</text><path d="M468.6 369.5v5" stroke="#000" stroke-width="1"/><path d="M488.4 369.5v3" stroke="#000" stroke-width="1"/><text x="468.6" y="383" font-size="8" text-anchor="middle" font-family="Liberation Sans" fill="#222">2.0</text><path d="M508.1 369.5v5" stroke="#000" stroke-width="1"/><path d="M527.9 369.5v3" stroke="#000" stroke-width="1"/><text x="508.1" y="383" font-size="8" text-anchor="middle" font-family="Liberation Sans" fill="#222">2.5</text><path d="M547.6 369.5v5" stroke="#000" stroke-width="1"/><path d="M567.4 369.5v3" stroke="#000" stroke-width="1"/><text x="547.6" y="383" font-size="8" text-anchor="middle" font-family="Liberation Sans" fill="#222">3.0</text><path d="M587.1 369.5v5" stroke="#000" stroke-width="1"/><path d="M606.9 369.5v3" stroke="#000" stroke-width="1"/><text x="587.1" y="383" font-size="8" text-anchor="middle" font-family="Liberation Sans" fill="#222">3.5</text><path d="M626.6 369.5v5" stroke="#000" stroke-width="1"/><path d="M646.4 369.5v3" stroke="#000" stroke-width="1"/><text x="626.6" y="383" font-size="8" text-anchor="middle" font-family="Liberation Sans" fill="#222">4.0</text><path d="M389 347L476.5 324.7L554.5 234.3L618 190.6" stroke="#303030" stroke-width="1.1" fill="none"/><text x="482.3" y="398.7" font-size="9.3" letter-spacing="0.45" font-family="Liberation Sans" fill="#222">X Axis Title</text></svg>
<div class="a" style="left:187px;top:20px;width:196px;height:378px;background:#f0f0f0;border:1px solid #979797;box-shadow:2px 2px 2px rgba(0,0,0,0.35)"></div>
<span class="a" style="left:212px;top:25.299999999999997px;line-height:16px;color:#000;white-space:nowrap">Simple <u>M</u>ath...</span>
<span class="a" style="left:212px;top:44.7px;line-height:16px;color:#000;white-space:nowrap"><u>S</u>moothing</span>
<div class="a" style="left:370px;top:46.7px;width:0;height:0;border-top:3.5px solid transparent;border-bottom:3.5px solid transparent;border-left:4.2px solid #000"></div>
<span class="a" style="left:212px;top:64px;line-height:16px;color:#000;white-space:nowrap">FFT F<u>i</u>lter</span>
<div class="a" style="left:370px;top:66px;width:0;height:0;border-top:3.5px solid transparent;border-bottom:3.5px solid transparent;border-left:4.2px solid #000"></div>
<div class="a" style="left:189px;top:82px;width:189px;height:18.5px;background:#3399ff"></div>
<span class="a w" style="left:212px;top:83.3px;line-height:16px;color:#fff;white-space:nowrap"><u>C</u>alculus</span>
<div class="a" style="left:370px;top:85.3px;width:0;height:0;border-top:3.5px solid transparent;border-bottom:3.5px solid transparent;border-left:4.2px solid #fff"></div>
<span class="a" style="left:212px;top:102.6px;line-height:16px;color:#000;white-space:nowrap">Su<u>b</u>tract</span>
<div class="a" style="left:370px;top:104.6px;width:0;height:0;border-top:3.5px solid transparent;border-bottom:3.5px solid transparent;border-left:4.2px solid #000"></div>
<span class="a" style="left:212px;top:121.9px;line-height:16px;color:#000;white-space:nowrap"><u>T</u>ranslate</span>
<div class="a" style="left:370px;top:123.9px;width:0;height:0;border-top:3.5px solid transparent;border-bottom:3.5px solid transparent;border-left:4.2px solid #000"></div>
<div class="a" style="left:190px;top:142px;width:189px;height:1px;background:#bababa"></div><div class="a" style="left:190px;top:143px;width:189px;height:1px;background:#fafafa"></div>
<span class="a" style="left:212px;top:147.2px;line-height:16px;color:#000;white-space:nowrap"><u>A</u>verage Multiple Curves</span>
<span class="a" style="left:212px;top:166.6px;line-height:16px;color:#000;white-space:nowrap">Interpolate/<u>E</u>xtrapolate...</span>
<span class="a" style="left:212px;top:185.9px;line-height:16px;color:#000;white-space:nowrap"><u>F</u>FT...</span>
<div class="a" style="left:190px;top:205px;width:189px;height:1px;background:#bababa"></div><div class="a" style="left:190px;top:206px;width:189px;height:1px;background:#fafafa"></div>
<span class="a" style="left:212px;top:211.2px;line-height:16px;color:#000;white-space:nowrap">Fit <u>L</u>inear</span>
<span class="a" style="left:212px;top:230.5px;line-height:16px;color:#000;white-space:nowrap">Fit <u>P</u>olynomial...</span>
<div class="a" style="left:190px;top:250px;width:189px;height:1px;background:#bababa"></div><div class="a" style="left:190px;top:251px;width:189px;height:1px;background:#fafafa"></div>
<span class="a" style="left:212px;top:255.8px;line-height:16px;color:#000;white-space:nowrap">Fit E<u>x</u>ponential Decay</span>
<div class="a" style="left:370px;top:257.8px;width:0;height:0;border-top:3.5px solid transparent;border-bottom:3.5px solid transparent;border-left:4.2px solid #000"></div>
<span class="a" style="left:212px;top:275.1px;line-height:16px;color:#000;white-space:nowrap">Fit Exponential Gr<u>o</u>wth</span>
<span class="a" style="left:212px;top:294.4px;line-height:16px;color:#000;white-space:nowrap">Fit Sigmoi<u>d</u>al</span>
<span class="a" style="left:212px;top:313.7px;line-height:16px;color:#000;white-space:nowrap">Fit <u>G</u>aussian</span>
<span class="a" style="left:212px;top:333px;line-height:16px;color:#000;white-space:nowrap">Fit Lo<u>r</u>entzian</span>
<span class="a" style="left:212px;top:352.3px;line-height:16px;color:#000;white-space:nowrap">Fit M<u>u</u>lti-peaks</span>
<div class="a" style="left:370px;top:354.3px;width:0;height:0;border-top:3.5px solid transparent;border-bottom:3.5px solid transparent;border-left:4.2px solid #000"></div>
<div class="a" style="left:190px;top:372px;width:189px;height:1px;background:#bababa"></div><div class="a" style="left:190px;top:373px;width:189px;height:1px;background:#fafafa"></div>
<span class="a" style="left:212px;top:376.7px;line-height:16px;color:#000;white-space:nowrap">Non-<u>l</u>inear Curve Fit</span>
<div class="a" style="left:370px;top:378.7px;width:0;height:0;border-top:3.5px solid transparent;border-bottom:3.5px solid transparent;border-left:4.2px solid #000"></div>
<div class="a" style="left:378px;top:78px;width:137px;height:64px;background:#f0f0f0;border:1px solid #979797;box-shadow:2px 2px 2px rgba(0,0,0,0.35)"></div>
<div class="a" style="left:381px;top:81px;width:131px;height:19px;background:#3399ff"></div>
<span class="a w" style="left:403px;top:83px;line-height:16px;color:#fff"><u>D</u>ifferentiate</span>
<span class="a" style="left:403px;top:102.5px;line-height:16px;color:#1a1a1a">Diff/<u>S</u>mooth...</span>
<span class="a" style="left:403px;top:122px;line-height:16px;color:#1a1a1a"><u>I</u>ntegrate</span>
</body></html>
